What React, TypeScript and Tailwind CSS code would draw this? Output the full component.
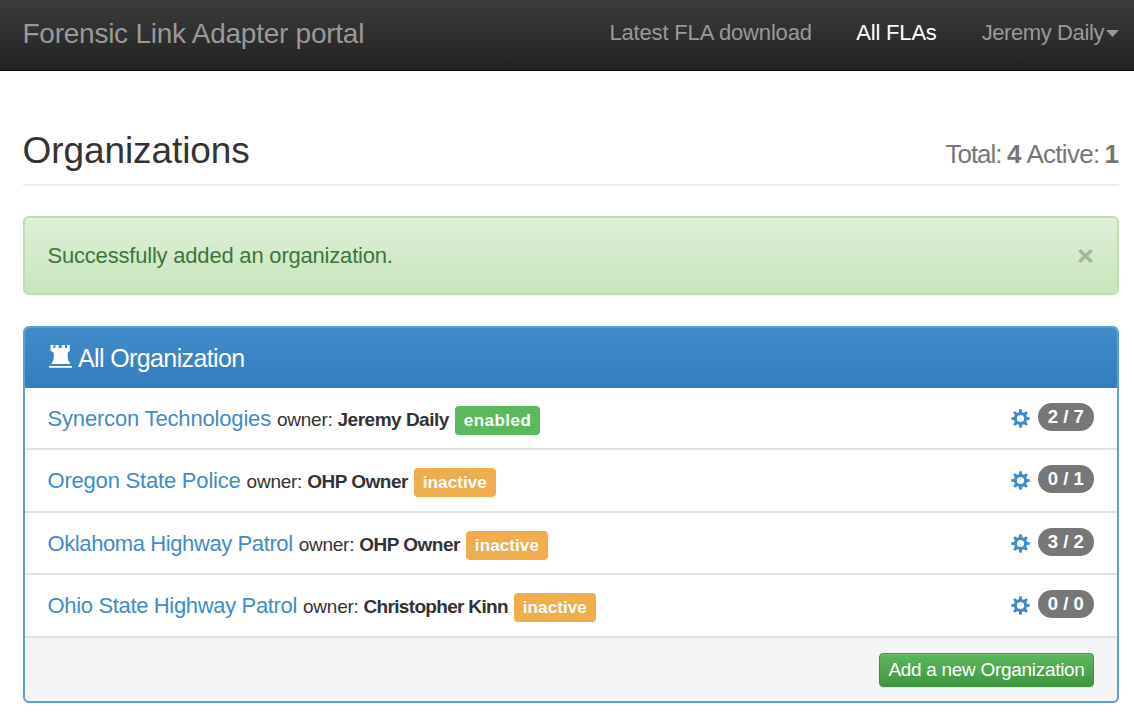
type Org = {
  name: string;
  nameTracking: string;
  owner: string;
  ownerTracking: string;
  status: "enabled" | "inactive";
  count: string;
};

const orgs: Org[] = [
  { name: "Synercon Technologies", nameTracking: "tracking-[-0.17px]", owner: "Jeremy Daily", ownerTracking: "tracking-[-0.5px]", status: "enabled", count: "2 / 7" },
  { name: "Oregon State Police", nameTracking: "tracking-[-0.2px]", owner: "OHP Owner", ownerTracking: "tracking-[-0.5px]", status: "inactive", count: "0 / 1" },
  { name: "Oklahoma Highway Patrol", nameTracking: "tracking-[-0.4px]", owner: "OHP Owner", ownerTracking: "tracking-[-0.5px]", status: "inactive", count: "3 / 2" },
  { name: "Ohio State Highway Patrol", nameTracking: "tracking-[-0.34px]", owner: "Christopher Kinn", ownerTracking: "tracking-[-0.68px]", status: "inactive", count: "0 / 0" },
];

function TowerIcon() {
  return (
    <svg className="h-[24px] w-[23px] shrink-0" viewBox="0 0 23 24" fill="#fff">
      <path d="M1.5 0h3v3h1.9V0h3.200v3h3.200V0h3.200v3h1.900V0h3v5c0 1.400-2.200 1.900-2.300 3.500 0 3 0.100 4.500 0.500 6.200 0.400 1.400 1.600 2.500 2.200 4.200H2.300c0.600-1.700 1.700-2.800 2.100-4.200 0.400-1.700 0.500-3.200 0.500-6.200-0.100-1.600-3.400-2.100-3.400-3.500z" />
      <path d="M0 20.900h23v1.800H0z" />
    </svg>
  );
}

const teeth = [0, 45, 90, 135, 180, 225, 270, 315];

function CogIcon() {
  return (
    <svg className="h-[19px] w-[19px] shrink-0" viewBox="-9.5 -9.5 19 19" fill="#428bca">
      <circle r="5.1" fill="none" stroke="#428bca" strokeWidth="3" />
      {teeth.map((angle) => (
        <path key={angle} d="M-1.8-5.500-1.200-9.200h2.400l0.600 3.700z" transform={`rotate(${angle})`} />
      ))}
    </svg>
  );
}

function OrgRow({ org }: { org: Org }) {
  return (
    <li className="flex h-[62.4px] items-start border-b-2 border-[#e2e2e2] pr-[23px] pl-[22.5px] whitespace-nowrap">
      <div className="flex items-baseline pt-[18px] leading-[25px]">
        <a className={`text-[22px] text-[#428bca] ${org.nameTracking}`}>{org.name}</a>
        <span className="ml-[6px] text-[19px] tracking-[-0.25px]">owner:</span>
        <strong className={`ml-[5px] text-[19px] ${org.ownerTracking}`}>{org.owner}</strong>
        <span
          className={
            org.status === "enabled"
              ? "ml-[6px] h-[29px] w-[85.5px] rounded-[4px] bg-[#5cb85c] text-center text-[17px] leading-[29px] font-bold tracking-[0.45px] text-white"
              : "ml-[6px] h-[29px] w-[82px] rounded-[4px] bg-[#f0ad4e] text-center text-[17px] leading-[29px] font-bold tracking-[0.1px] text-white"
          }
        >
          {org.status}
        </span>
      </div>
      <div className="ml-auto flex items-start">
        <div className="pt-[21px]">
          <CogIcon />
        </div>
        <span className="mt-[15px] ml-[8px] h-[28px] w-[56.5px] rounded-full bg-[#777] text-center text-[18.5px] leading-[27px] font-bold text-white">
          {org.count}
        </span>
      </div>
    </li>
  );
}

export default function App() {
  return (
    <div className="h-[720px] overflow-hidden bg-white font-['Liberation_Sans',Arial,sans-serif] text-[#333]">
      <nav className="flex h-[71px] items-start border-b border-[#080808] bg-linear-to-b from-[#3c3c3c] to-[#222] pr-[15px] pl-[22.5px] whitespace-nowrap text-[#999]">
        <a className="pt-[18px] text-[28px] leading-[32px] tracking-[-0.25px]">Forensic Link Adapter portal</a>
        <div className="ml-auto flex pt-[20px] text-[22px] leading-[26px]">
          <a className="tracking-[-0.16px]">Latest FLA download</a>
          <a className="ml-[44.5px] tracking-[-0.2px] text-white">All FLAs</a>
          <a className="ml-[45px] flex tracking-[-0.4px]">
            Jeremy Daily
            <svg className="mt-[10px] ml-[2px] h-[7px] w-[13px]" viewBox="0 0 13 7" fill="#999">
              <path d="M0 0h13L6.5 7z" />
            </svg>
          </a>
        </div>
      </nav>

      <main className="pr-[15px] pl-[23px]">
        <header className="flex h-[115px] items-baseline justify-between border-b-2 border-[#eee] pt-[59px] whitespace-nowrap">
          <h1 className="-ml-[0.5px] text-[37px] leading-[42px] tracking-[-0.08px]">Organizations</h1>
          <p className="text-[26px] text-[#777]">
            <span className="tracking-[-1.05px]">Total:</span>
            <strong className="ml-[5.5px]">4</strong>
            <span className="ml-[5px] tracking-[-0.7px]">Active:</span>
            <strong className="ml-[5px]">1</strong>
          </p>
        </header>

        <div className="mt-[30px] flex h-[79px] items-start justify-between rounded-[6px] border-2 border-[#bbdfad] bg-linear-to-b from-[#dff0d8] to-[#c8e5bc] pr-[24px] pl-[22.5px] shadow-[inset_0_1px_0_rgba(255,255,255,0.25),0_1px_2px_rgba(0,0,0,0.05)]">
          <span className="pt-[25px] text-[22px] leading-[26px] tracking-[-0.2px] text-[#3c763d]">
            Successfully added an organization.
          </span>
          <svg className="mt-[31px] h-[14px] w-[15px]" viewBox="0 0 15 14" stroke="#a4b79e" strokeWidth="3.5">
            <path d="M1.3 1.2l12.4 11.6M13.7 1.2L1.3 12.8" />
          </svg>
        </div>

        <section className="mt-[31px] h-[377px] overflow-hidden rounded-[6px] border-2 border-[#5f9fd8] bg-[#f5f5f5] shadow-[0_1px_2px_rgba(0,0,0,0.05)]">
          <div className="flex h-[60px] items-start bg-linear-to-b from-[#428bca] to-[#357ebd] pt-[17px] pl-[24px] text-white">
            <TowerIcon />
            <h2 className="-mt-[2px] ml-[6px] text-[25px] leading-[30px] tracking-[-0.62px]">All Organization</h2>
          </div>
          <ul className="bg-white">
            {orgs.map((org) => (
              <OrgRow key={org.name} org={org} />
            ))}
          </ul>
          <div className="flex justify-end pt-[15px] pr-[23px]">
            <button className="h-[34px] w-[215px] rounded-[4px] border-[1.5px] border-[#3e8f3e] bg-linear-to-b from-[#5cb85c] to-[#419641] text-center text-[19px] leading-[31px] tracking-[-0.3px] whitespace-nowrap text-white shadow-[inset_0_1px_0_rgba(255,255,255,0.15),0_1px_1px_rgba(0,0,0,0.075)]">
              Add a new Organization
            </button>
          </div>
        </section>
      </main>
    </div>
  );
}
